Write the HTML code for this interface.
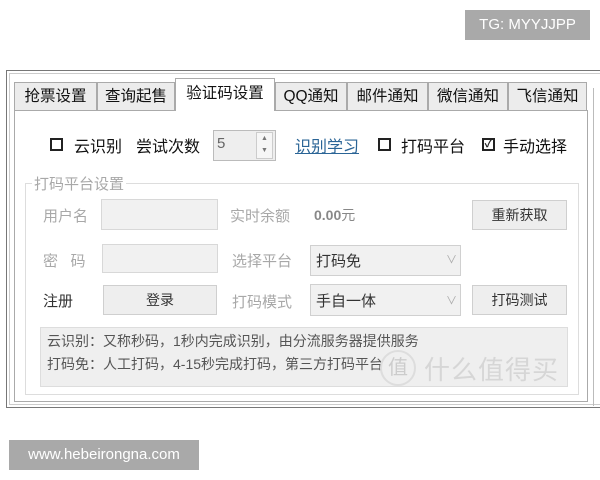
<!DOCTYPE html>
<html><head><meta charset="utf-8"><style>
*{margin:0;padding:0;box-sizing:border-box}
body{width:600px;height:480px;background:#fff;position:relative;overflow:hidden;font-family:"Liberation Sans","Noto Sans CJK SC",sans-serif;color:#222;font-size:15px}
.a{position:absolute;white-space:nowrap}
.tab{position:absolute;top:82px;height:29px;border:1px solid #aaa;border-bottom:none;background:#ececec;text-align:center;line-height:28px;font-size:15.5px;color:#111}
.sel{top:78px;height:33px;background:#fff;line-height:30px;z-index:2}
.cb{position:absolute;width:13px;height:13px;border:2px solid #222;background:#fff}
.inp{position:absolute;background:#f1f1f1;border:1px solid #d8d8d8}
.btn{position:absolute;background:#eeeeee;border:1px solid #cfcfcf;text-align:center;font-size:14px;color:#333}
.g{color:#a8a8a8}
.r1{font-size:16px;color:#111}
</style></head><body>
<div class="a" style="left:465px;top:10px;width:125px;height:30px;background:#a9a9a9;color:#fff;font-size:15px;line-height:30px;text-align:center">TG: MYYJJPP</div>
<div class="a" style="left:9px;top:440px;width:190px;height:30px;background:#a9a9a9;color:#fff;font-size:15px;line-height:30px;text-align:center">www.hebeirongna.com</div>

<div class="a" style="left:6px;top:70px;width:600px;height:338px;border:1px solid #777;border-right:none"></div>
<div class="a" style="left:9px;top:73px;width:600px;height:332px;border:1px solid #ccc;border-right:none"></div>
<div class="a" style="left:593px;top:88px;width:10px;height:318px;border-left:1px solid #bbb"></div>

<div class="tab" style="left:14px;width:83px">抢票设置</div>
<div class="tab" style="left:97px;width:78px">查询起售</div>
<div class="tab sel" style="left:175px;width:100px">验证码设置</div>
<div class="tab" style="left:275px;width:72px">QQ通知</div>
<div class="tab" style="left:347px;width:81px">邮件通知</div>
<div class="tab" style="left:428px;width:80px">微信通知</div>
<div class="tab" style="left:508px;width:79px">飞信通知</div>
<div class="a" style="left:14px;top:110px;width:574px;height:292px;border:1px solid #aaa;background:#fff"></div>

<div class="cb" style="left:50px;top:138px"></div>
<div class="a r1" style="left:74px;top:133px">云识别</div>
<div class="a r1" style="left:136px;top:133px">尝试次数</div>
<div class="a" style="left:213px;top:130px;width:63px;height:31px;border:1px solid #bbb;background:#eee"></div>
<div class="a" style="left:217px;top:135px;color:#666">5</div>
<div class="a" style="left:256px;top:132px;width:17px;height:27px;border:1px solid #ccc;background:#f6f6f6;font-size:7px;line-height:12px;text-align:center;color:#777">▲<br>▼</div>
<div class="a r1" style="left:295px;top:133px;color:#2a6496;text-decoration:underline">识别学习</div>
<div class="cb" style="left:378px;top:138px"></div>
<div class="a r1" style="left:401px;top:133px">打码平台</div>
<div class="cb" style="left:482px;top:138px;font-size:11px;line-height:9px;text-align:center;font-weight:bold">✓</div>
<div class="a r1" style="left:503px;top:133px">手动选择</div>

<div class="a" style="left:25px;top:183px;width:554px;height:212px;border:1px solid #ddd"></div>
<div class="a g" style="left:32px;top:173px;background:#fff;padding:0 2px">打码平台设置</div>

<div class="a g" style="left:43px;top:205px">用户名</div>
<div class="inp" style="left:101px;top:199px;width:117px;height:31px"></div>
<div class="a g" style="left:230px;top:205px">实时余额</div>
<div class="a" style="left:314px;top:205px;color:#888;font-weight:bold;font-size:14px">0.00<span style="font-weight:normal">元</span></div>
<div class="btn" style="left:472px;top:200px;width:95px;height:30px;line-height:28px">重新获取</div>

<div class="a g" style="left:43px;top:250px">密&nbsp;&nbsp;&nbsp;码</div>
<div class="inp" style="left:102px;top:244px;width:116px;height:29px"></div>
<div class="a g" style="left:232px;top:250px">选择平台</div>
<div class="inp" style="left:310px;top:245px;width:151px;height:31px;border-color:#d0d0d0"></div>
<div class="a" style="left:316px;top:250px;color:#333">打码免</div>
<div class="a g" style="left:446px;top:251px;font-size:11px">∨</div>

<div class="a" style="left:43px;top:290px;color:#333">注册</div>
<div class="btn" style="left:103px;top:285px;width:114px;height:30px;line-height:28px">登录</div>
<div class="a g" style="left:232px;top:291px">打码模式</div>
<div class="inp" style="left:310px;top:284px;width:151px;height:32px;border-color:#d0d0d0"></div>
<div class="a" style="left:316px;top:290px;color:#333">手自一体</div>
<div class="a g" style="left:446px;top:292px;font-size:11px">∨</div>
<div class="btn" style="left:472px;top:285px;width:95px;height:30px;line-height:28px">打码测试</div>

<div class="a" style="left:40px;top:327px;width:528px;height:60px;background:#efefef;border:1px solid #ddd"></div>
<div class="a" style="left:47px;top:331px;font-size:14px;color:#555">云识别：又称秒码，1秒内完成识别，由分流服务器提供服务</div>
<div class="a" style="left:47px;top:354px;font-size:14px;color:#555">打码免：人工打码，4-15秒完成打码，第三方打码平台</div>
<div class="a" style="left:380px;top:350px;width:36px;height:36px;border:2px solid #ddd;border-radius:50%;color:#ccc;font-size:20px;line-height:32px;text-align:center">值</div>
<div class="a" style="left:424px;top:350px;font-size:26px;color:#d6d6d6;letter-spacing:1px">什么值得买</div>
</body></html>
